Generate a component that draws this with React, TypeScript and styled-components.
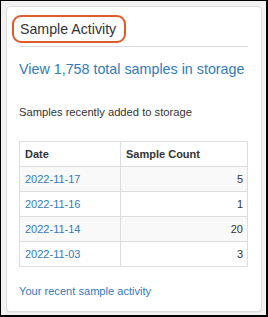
import React from 'react';
import styled, { createGlobalStyle } from 'styled-components';

const GlobalStyle = createGlobalStyle`
  html, body {
    margin: 0;
    padding: 0;
  }

  body {
    font-family: "Liberation Sans", Arial, sans-serif;
    color: #333;
  }
`;

const Frame = styled.div`
  box-sizing: border-box;
  width: 268px;
  height: 317px;
  display: flex;
  padding: 5px 4px 3px 5px;
  background-color: #f2f2f2;
  border-style: solid;
  border-color: #000;
  border-width: 1px 2px 2px 1px;
`;

const Panel = styled.div`
  flex: 1;
  display: flex;
  flex-direction: column;
  padding: 12px 13px 0 12px;
  background-color: #fff;
  border: 1px solid #dcdcdc;
  border-radius: 4px;
  box-shadow: 0 1px 1px rgba(0, 0, 0, 0.05);
`;

const Heading = styled.div`
  padding-bottom: 7px;
  border-bottom: 1px solid #ddd;
`;

const Title = styled.h3`
  position: relative;
  display: inline-block;
  margin: 0 0 0 1px;
  font-size: 14.2px;
  font-weight: normal;
  line-height: 20px;
  color: #333;
`;

const Callout = styled.span`
  position: absolute;
  top: -4px;
  left: -8px;
  right: -10px;
  bottom: -4px;
  border: 2px solid #e05a2a;
  border-radius: 9px;
`;

const TotalLink = styled.a`
  display: block;
  margin-top: 12px;
  font-size: 14.3px;
  line-height: 20px;
  color: #337ab7;
  text-decoration: none;
`;

const Caption = styled.p`
  margin: 25px 0 0;
  font-size: 11.2px;
  line-height: 16px;
`;

const Table = styled.table`
  width: 229px;
  margin-top: 21px;
  border-collapse: collapse;
  border: 1px solid #ddd;
  font-size: 11px;
  line-height: 14px;

  th, td {
    padding: 5px;
    border: 1px solid #ddd;
    text-align: left;
  }

  th {
    font-weight: bold;
  }

  th:first-child, td:first-child {
    width: 90px;
  }

  tbody tr:nth-child(odd) {
    background-color: #f9f9f9;
  }
`;

const DateCell = styled.td`
  a {
    color: #337ab7;
    text-decoration: none;
  }
`;

const CountCell = styled.td`
  && {
    text-align: right;
    padding-right: 4px;
  }
`;

const FooterLink = styled.a`
  display: block;
  margin-top: 16px;
  font-size: 11.1px;
  line-height: 16px;
  color: #337ab7;
  text-decoration: none;
`;

const rows = [
  { date: '2022-11-17', count: 5 },
  { date: '2022-11-16', count: 1 },
  { date: '2022-11-14', count: 20 },
  { date: '2022-11-03', count: 3 },
];

export default function App() {
  return (
    <>
      <GlobalStyle />
      <Frame>
        <Panel>
          <Heading>
            <Title>
              Sample Activity
              <Callout />
            </Title>
          </Heading>
          <TotalLink href="#">View 1,758 total samples in storage</TotalLink>
          <Caption>Samples recently added to storage</Caption>
          <Table>
            <thead>
              <tr>
                <th>Date</th>
                <th>Sample Count</th>
              </tr>
            </thead>
            <tbody>
              {rows.map(row => (
                <tr key={row.date}>
                  <DateCell><a href="#">{row.date}</a></DateCell>
                  <CountCell>{row.count}</CountCell>
                </tr>
              ))}
            </tbody>
          </Table>
          <FooterLink href="#">Your recent sample activity</FooterLink>
        </Panel>
      </Frame>
    </>
  );
}
